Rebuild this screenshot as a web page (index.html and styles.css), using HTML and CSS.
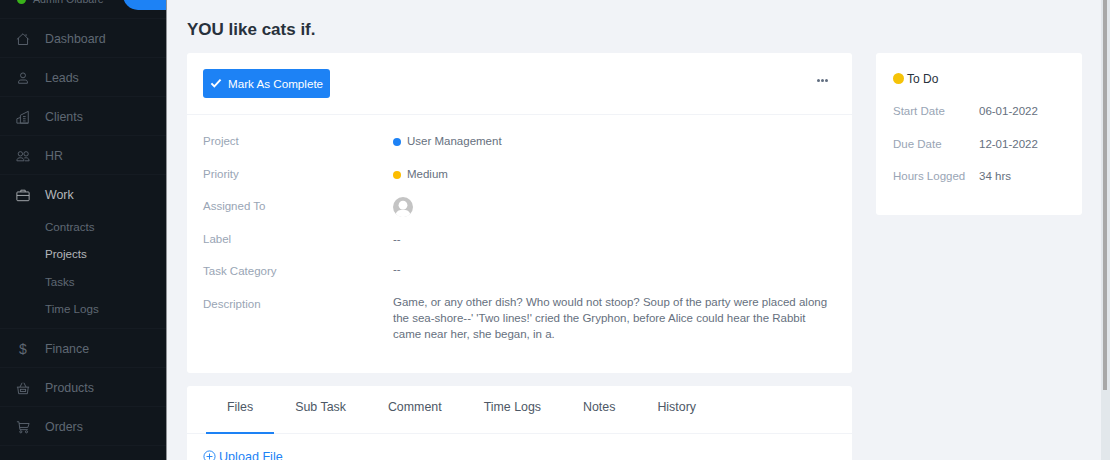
FILE: index.html
```html
<!DOCTYPE html>
<html lang="en">
<head>
  <meta charset="UTF-8">
  <title>YOU like cats if.</title>
  <link rel="stylesheet" href="styles.css">
</head>
<body>
  <aside class="sidebar">
    <div class="user-row">
      <span class="online"></span>
      <span class="user-name">Admin Oldbare</span>
      <span class="user-btn"></span>
    </div>
    <nav>
      <a class="nav-item">
        <svg class="nav-icon" viewBox="0 0 16 16"><path d="M1 8.500 8 2l6.500 6.500M2.800 7v7.300h10.400V7M11.500 2.500v2"/></svg>
        Dashboard
      </a>
      <a class="nav-item">
        <svg class="nav-icon" viewBox="0 0 16 16"><circle cx="8" cy="5" r="2.800"/><path d="M3 14v-1.600C3 11 4.200 10.300 5.500 10.300h5c1.300 0 2.500.7 2.500 2.100V14z"/></svg>
        Leads
      </a>
      <a class="nav-item">
        <svg class="nav-icon" viewBox="0 0 16 16"><path d="M1 15V10l4-1.500M5 15V6l9-4.500V15zM1 15h13M8 7.500h3M8 10h3M8 12.500h3"/></svg>
        Clients
      </a>
      <a class="nav-item">
        <svg class="nav-icon" viewBox="0 0 16 16"><circle cx="5" cy="5.500" r="2.500"/><circle cx="11.500" cy="5.500" r="2.500"/><path d="M1 13.500c0-2.500 1.500-3.500 4-3.500s4 1 4 3.500zM9.500 10.200c3-.7 5.500.3 5.500 3.300h-5"/></svg>
        HR
      </a>
      <div class="nav-group">
        <a class="nav-item active">
          <svg class="nav-icon" viewBox="0 0 16 16"><rect x="1" y="4.500" width="14" height="10" rx="1"/><path d="M5.500 4.500V2.500h5v2M1 8.500h14"/></svg>
          Work
        </a>
        <ul class="sub-nav">
          <li>Contracts</li>
          <li class="current">Projects</li>
          <li>Tasks</li>
          <li>Time Logs</li>
        </ul>
      </div>
      <a class="nav-item">
        <span class="nav-icon dollar">$</span>
        Finance
      </a>
      <a class="nav-item">
        <svg class="nav-icon" viewBox="0 0 16 16"><path d="M1 7h14M2 7l1 7.500h10L14 7M4.500 7 7 2M11.500 7 9 2"/><rect x="5" y="9.500" width="6" height="2.500"/></svg>
        Products
      </a>
      <a class="nav-item">
        <svg class="nav-icon" viewBox="0 0 16 16"><path d="M1 2h2.300l1.200 9h9M3.600 4H15l-1.500 4.500H4.200"/><circle cx="5.500" cy="13.500" r="1.200"/><circle cx="12" cy="13.500" r="1.200"/></svg>
        Orders
      </a>
    </nav>
  </aside>

  <main class="content">
    <h1>YOU like cats if.</h1>
    <div class="columns">
      <div class="left-col">
        <section class="card">
          <div class="card-head">
            <button class="complete-btn">
              <svg class="check" viewBox="0 0 14 12"><path d="M1.500 6.500 5 10l7.500-8"/></svg>
              Mark As Complete
            </button>
            <span class="more"><i></i><i></i><i></i></span>
          </div>
          <div class="details">
            <div class="row"><span class="key">Project</span><span class="val"><i class="dot blue"></i>User Management</span></div>
            <div class="row"><span class="key">Priority</span><span class="val"><i class="dot yellow"></i>Medium</span></div>
            <div class="row avatar-row"><span class="key">Assigned To</span>
              <svg class="avatar" viewBox="0 0 20 20"><circle cx="10" cy="10" r="10" fill="#c4c4c4"/><circle cx="10" cy="8.200" r="4.400" fill="#fff"/><path d="M2.800 17c1.200-3.400 3.800-4.200 7.200-4.200s6 .8 7.200 4.200a10 10 0 0 1-14.400 0z" fill="#fff"/></svg>
            </div>
            <div class="row"><span class="key">Label</span><span class="val">--</span></div>
            <div class="row"><span class="key">Task Category</span><span class="val raised">--</span></div>
            <div class="row desc"><span class="key">Description</span>
              <p class="val">Game, or any other dish? Who would not stoop? Soup of the party were placed along the sea-shore--' 'Two lines!' cried the Gryphon, before Alice could hear the Rabbit came near her, she began, in a.</p>
            </div>
          </div>
        </section>
        <section class="card tabs-card">
          <div class="tabs">
            <a class="tab on">Files</a>
            <a class="tab">Sub Task</a>
            <a class="tab">Comment</a>
            <a class="tab">Time Logs</a>
            <a class="tab">Notes</a>
            <a class="tab">History</a>
          </div>
          <a class="upload">
            <svg viewBox="0 0 14 14"><circle cx="7" cy="7" r="6"/><path d="M7 3.800v6.400M3.800 7h6.400"/></svg>
            Upload File
          </a>
        </section>
      </div>
      <section class="card side-card">
        <div class="status"><i class="status-dot"></i>To Do</div>
        <div class="side-row"><span class="key">Start Date</span><span class="val">06-01-2022</span></div>
        <div class="side-row"><span class="key">Due Date</span><span class="val">12-01-2022</span></div>
        <div class="side-row"><span class="key">Hours Logged</span><span class="val">34 hrs</span></div>
      </section>
    </div>
  </main>
  <div class="scrollbar"><div class="thumb"></div></div>
</body>
</html>
```

FILE: styles.css
```css
* {
  box-sizing: border-box;
}
html, body {
  height: 100%;
}
body {
  margin: 0;
  display: flex;
  overflow: hidden;
  background: #f1f3f7;
  font-family: "Liberation Sans", Arial, sans-serif;
  font-size: 11.500px;
  color: #66707e;
}
a, li {
  display: block;
}

/* sidebar */
.sidebar {
  width: 167px;
  flex: none;
  background: #10161c;
  border-right: 1px solid #8f9296;
  color: #5f6873;
  overflow: hidden;
}
.user-row {
  height: 19px;
  display: flex;
  align-items: center;
  padding-left: 17px;
  border-bottom: 1px solid #151b22;
  position: relative;
}
.online {
  width: 9px;
  height: 9px;
  margin-top: -20px;
  border-radius: 50%;
  background: #39b21a;
}
.user-name {
  margin: -20px 0 0 7px;
  font-size: 10.600px;
  white-space: nowrap;
}
.user-btn {
  position: absolute;
  left: 123px;
  top: -20px;
  width: 60px;
  height: 30px;
  border-radius: 15px;
  background: #1d82f5;
}
.nav-item {
  height: 39px;
  display: flex;
  align-items: center;
  padding: 1px 0 0 16px;
  border-bottom: 1px solid #151b22;
  font-size: 12.400px;
}
.nav-item.active {
  color: #b4b7bb;
  border-bottom: 0;
}
.nav-icon {
  width: 14px;
  height: 14px;
  margin-right: 15px;
  flex: none;
  fill: none;
  stroke: currentColor;
  stroke-width: 1;
}
.dollar {
  font-size: 14px;
  line-height: 14px;
  text-align: center;
}
.nav-group {
  border-bottom: 1px solid #151b22;
}
.sub-nav {
  list-style: none;
  margin: -1.500px 0 0;
  padding: 0 0 5.500px 45px;
  font-size: 11.600px;
}
.sub-nav li {
  height: 27.500px;
  line-height: 27px;
}
.sub-nav .current {
  color: #b4b7bb;
}

/* main column */
.content {
  flex: 1;
  min-width: 0;
  padding: 0 28px 0 20px;
}
h1 {
  margin: 20px 0 14px;
  font-size: 17px;
  line-height: 19px;
  font-weight: bold;
  color: #28313c;
}
.columns {
  display: flex;
  gap: 24px;
  align-items: flex-start;
}
.left-col {
  width: 665px;
  flex: none;
}
.card {
  background: #fff;
  border-radius: 3px;
}
.card-head {
  height: 62px;
  display: flex;
  align-items: center;
  justify-content: space-between;
  padding: 0 24px 1px 16px;
  border-bottom: 1px solid #f1f3f7;
}
.complete-btn {
  height: 29px;
  display: flex;
  align-items: center;
  gap: 6px;
  padding: 0 7px;
  border: 0;
  border-radius: 3px;
  background: #1d82f5;
  color: #fff;
  font: 11.650px "Liberation Sans", Arial, sans-serif;
}
.check {
  width: 12px;
  height: 10px;
  fill: none;
  stroke: #fff;
  stroke-width: 2.400;
}
.more {
  display: flex;
  gap: 1px;
  margin-bottom: 5px;
}
.more i {
  width: 3px;
  height: 3px;
  border-radius: 50%;
  background: #616e80;
}
.details {
  padding: 18px 16px 31px;
}
.row {
  display: flex;
  height: 32.600px;
  line-height: 16px;
}
.key {
  color: #99a5b5;
}
.row .key {
  width: 190px;
  flex: none;
}
.val {
  margin: 0;
  display: flex;
  align-items: center;
  align-self: flex-start;
}
.val.raised {
  margin-top: -2px;
}
.dot {
  width: 8px;
  height: 8px;
  margin: 2px 6px 0 0;
  border-radius: 50%;
}
.blue {
  background: #1d82f5;
}
.yellow {
  background: #fcbd01;
}
.avatar {
  width: 20px;
  height: 20px;
  margin-top: -1px;
}
.row.desc {
  height: auto;
}
.row.desc .val {
  display: block;
  width: 450px;
  margin-top: -2px;
}

/* tabs */
.tabs-card {
  margin-top: 13px;
  height: 90px;
}
.tabs {
  display: flex;
  padding: 0 19px;
  height: 48px;
  border-bottom: 1px solid #f1f3f7;
}
.tab {
  height: 48px;
  padding: 0 21px;
  line-height: 43px;
  color: #4d5866;
  font-size: 12.400px;
}
.tab.on {
  border-bottom: 2px solid #1d82f5;
}
.upload {
  display: flex;
  align-items: center;
  gap: 3px;
  padding: 16px 16px 0;
  color: #1d82f5;
  font-size: 12.600px;
}
.upload svg {
  width: 13px;
  height: 13px;
  fill: none;
  stroke: #1d82f5;
  stroke-width: 1;
}

/* status card */
.side-card {
  width: 206px;
  height: 162px;
  padding: 17px;
}
.status {
  display: flex;
  align-items: center;
  gap: 3px;
  height: 17px;
  color: #28313c;
  font-size: 12px;
  margin-bottom: 8px;
}
.status-dot {
  width: 11px;
  height: 11px;
  border-radius: 50%;
  background: #f5c308;
}
.side-row {
  display: flex;
  height: 32.500px;
  align-items: center;
}
.side-row .key {
  width: 86px;
  flex: none;
  white-space: nowrap;
}
.side-row .val {
  align-self: center;
}

.scrollbar {
  position: fixed;
  top: 0;
  right: 0;
  width: 9px;
  height: 460px;
  background: #e2e7eb;
}
.thumb {
  width: 4px;
  height: 390px;
  margin-left: 2px;
  background: #a8a8a8;
}
```
